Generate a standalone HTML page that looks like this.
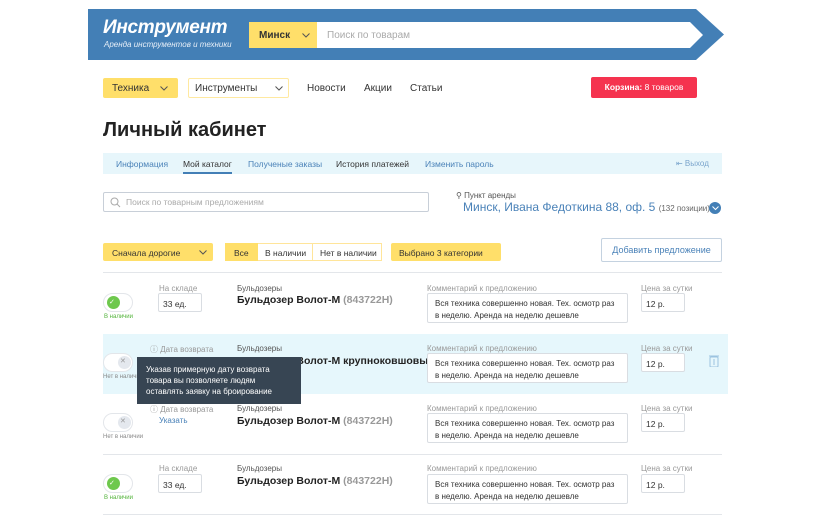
<!DOCTYPE html>
<html><head><meta charset="utf-8"><style>
*{box-sizing:border-box;margin:0;padding:0}
body{width:825px;height:525px;background:#fff;font-family:"Liberation Sans",sans-serif;position:relative;overflow:hidden;color:#222}
.a{position:absolute;white-space:nowrap}
.lbl{font-size:8px;color:#999}
.inp{position:absolute;border:1px solid #d9dde2;border-radius:2px;background:#fff;font-size:8.5px;color:#333}
.cm{font-size:8px;padding:4px 7px;white-space:normal;line-height:12px;width:201px;height:30px}
.tg{position:absolute;width:30px;height:19px;border:1px solid #e3e6ea;border-radius:10px;background:#fff}
.tg i{position:absolute;left:3px;top:2px;width:13px;height:13px;border-radius:50%}
.t{font-size:10.5px;font-weight:bold}
</style></head><body>
<svg class="a" style="left:88px;top:9px" width="640" height="52"><polygon points="0,0 608,0 636,25.5 608,51 0,51" fill="#437fb6"/><polygon points="161,13 602,13 615,26 602,39 161,39" fill="#fff"/><rect x="161" y="13" width="68" height="26" fill="#ffdf6a"/></svg>
<div class="a" style="left:103px;top:17px;color:#fff;font:italic bold 19px 'Liberation Sans',sans-serif;letter-spacing:-0.3px">Инструмент</div>
<div class="a" style="left:104px;top:40px;color:#e6eef7;font:italic 8px 'Liberation Sans',sans-serif">Аренда инструментов и техники</div>
<div class="a" style="left:259px;top:30px;font-size:10px;font-weight:bold;color:#333">Минск</div>
<svg class="a" style="left:302px;top:33px" width="8" height="5"><polyline points="0.5,0.5 4,4 7.5,0.5" fill="none" stroke="#555"/></svg>
<div class="a" style="left:327px;top:30px;font-size:10px;color:#aaa">Поиск по товарам</div>

<div class="a" style="left:103px;top:78px;width:75px;height:20px;background:#ffdf6a;border-radius:2px"></div>
<div class="a" style="left:112px;top:83px;font-size:10px;color:#333">Техника</div>
<svg class="a" style="left:160px;top:86px" width="8" height="5"><polyline points="0.5,0.5 4,4 7.5,0.5" fill="none" stroke="#555"/></svg>
<div class="a" style="left:188px;top:78px;width:101px;height:20px;border:1px solid #ffe9a0;border-radius:2px"></div>
<div class="a" style="left:195px;top:83px;font-size:10px;color:#333">Инструменты</div>
<svg class="a" style="left:275px;top:86px" width="8" height="5"><polyline points="0.5,0.5 4,4 7.5,0.5" fill="none" stroke="#555"/></svg>
<div class="a" style="left:307px;top:83px;font-size:10px;color:#333">Новости</div>
<div class="a" style="left:364px;top:83px;font-size:10px;color:#333">Акции</div>
<div class="a" style="left:410px;top:83px;font-size:10px;color:#333">Статьи</div>
<div class="a" style="left:591px;top:77px;width:106px;height:21px;background:#f5334f;border-radius:2px;color:#fff;font-size:8.5px;line-height:21px;text-align:center"><b>Корзина:</b> 8 товаров</div>

<div class="a" style="left:103px;top:119px;font-size:20px;font-weight:bold;color:#222">Личный кабинет</div>

<div class="a" style="left:103px;top:153px;width:619px;height:21px;background:#e7f6fb"></div>
<div class="a" style="left:116px;top:159px;font-size:8.5px;color:#4a82b8">Информация</div>
<div class="a" style="left:183px;top:159px;font-size:8.5px;color:#333">Мой каталог</div>
<div class="a" style="left:183px;top:172px;width:49px;height:2px;background:#437fb6"></div>
<div class="a" style="left:248px;top:159px;font-size:8.5px;color:#4a82b8">Полученые заказы</div>
<div class="a" style="left:336px;top:159px;font-size:8.5px;color:#333">История платежей</div>
<div class="a" style="left:425px;top:159px;font-size:8.5px;color:#4a82b8">Изменить пароль</div>
<div class="a" style="left:676px;top:159px;font-size:8px;color:#7aa4cc">⇤ Выход</div>

<div class="inp" style="left:103px;top:192px;width:326px;height:20px;border-color:#c8cfd8"></div>
<svg class="a" style="left:110px;top:197px" width="11" height="11"><circle cx="4.5" cy="4.5" r="3.5" fill="none" stroke="#aaa"/><line x1="7" y1="7" x2="10" y2="10" stroke="#aaa"/></svg>
<div class="a" style="left:126px;top:197px;font-size:8.5px;color:#aaa">Поиск по товарным предложениям</div>
<div class="a" style="left:456px;top:191px;font-size:8px;color:#555">⚲ Пункт аренды</div>
<div class="a" style="left:463px;top:200px;font-size:12px;color:#4a82b8">Минск, Ивана Федоткина 88, оф. 5 <span style="font-size:8px;color:#666">(132 позиции)</span></div>
<div class="a" style="left:709px;top:202px;width:12px;height:12px;border-radius:50%;background:#437fb6"></div>
<svg class="a" style="left:712px;top:206px" width="7" height="5"><polyline points="0.5,0.5 3.5,3.5 6.5,0.5" fill="none" stroke="#fff"/></svg>

<div class="a" style="left:103px;top:243px;width:110px;height:18px;background:#ffdf6a;border-radius:2px"></div>
<div class="a" style="left:112px;top:248px;font-size:8.5px;color:#333">Сначала дорогие</div>
<svg class="a" style="left:199px;top:250px" width="8" height="5"><polyline points="0.5,0.5 4,4 7.5,0.5" fill="none" stroke="#555"/></svg>
<div class="a" style="left:225px;top:243px;width:157px;height:18px;border:1px solid #ffe59a"></div>
<div class="a" style="left:225px;top:243px;width:33px;height:18px;background:#ffdf6a"></div>
<div class="a" style="left:234px;top:248px;font-size:8.5px;color:#333">Все</div>
<div class="a" style="left:265px;top:248px;font-size:8.5px;color:#333">В наличии</div>
<div class="a" style="left:312px;top:243px;width:1px;height:18px;background:#ffe59a"></div>
<div class="a" style="left:320px;top:248px;font-size:8.5px;color:#333">Нет в наличии</div>
<div class="a" style="left:391px;top:243px;width:110px;height:18px;background:#ffdf6a;border-radius:2px"></div>
<div class="a" style="left:399px;top:248px;font-size:8.5px;color:#333">Выбрано 3 категории</div>
<div class="a" style="left:601px;top:238px;width:121px;height:24px;border:1px solid #c4d2e0;border-radius:2px;font-size:9px;color:#4a82b8;text-align:center;line-height:22px">Добавить предложение</div>

<div class="a" style="left:103px;top:272px;width:619px;height:1px;background:#e3e6ea"></div>
<div class="a" style="left:103px;top:334px;width:625px;height:60px;background:#e6f7fc"></div>
<div class="a" style="left:103px;top:454px;width:619px;height:1px;background:#e3e6ea"></div>
<div class="a" style="left:103px;top:514px;width:619px;height:1px;background:#e3e6ea"></div>

<!-- row1 -->
<div class="tg" style="left:103px;top:293px"><i style="background:#6ec84d"></i></div>
<div class="a" style="left:109px;top:298px;font-size:7px;color:#fff">✓</div>
<div class="a" style="left:104px;top:314px;font-size:6px;color:#52b33a">В наличии</div>
<div class="a lbl" style="left:159px;top:284px">На складе</div>
<div class="inp" style="left:158px;top:293px;width:44px;height:19px;padding:5px 4px">33 ед.</div>
<div class="a" style="left:237px;top:284px;font-size:8px;color:#555">Бульдозеры</div>
<div class="a t" style="left:237px;top:294px">Бульдозер Волот-М <span style="color:#999">(843722H)</span></div>
<div class="a lbl" style="left:427px;top:284px">Комментарий к предложению</div>
<div class="inp cm" style="left:427px;top:293px">Вся техника совершенно новая. Тех. осмотр раз в неделю. Аренда на неделю дешевле</div>
<div class="a lbl" style="left:641px;top:284px">Цена за сутки</div>
<div class="inp" style="left:641px;top:293px;width:44px;height:19px;padding:5px 4px">12 р.</div>

<!-- row2 -->
<div class="tg" style="left:103px;top:353px"><i style="left:14px;background:#e4e8ee"></i></div>
<div class="a" style="left:120px;top:357px;font-size:7px;color:#999">✕</div>
<div class="a" style="left:103px;top:374px;font-size:6px;color:#888">Нет в наличии</div>
<div class="a lbl" style="left:150px;top:344px">ⓘ Дата возврата</div>
<div class="a" style="left:237px;top:344px;font-size:8px;color:#555">Бульдозеры</div>
<div class="a t" style="left:237px;top:355px">Бульдозер Волот-М крупноковшовый</div>
<div class="a t" style="left:237px;top:367px;color:#999">(843722H)</div>
<div class="a lbl" style="left:427px;top:344px">Комментарий к предложению</div>
<div class="inp cm" style="left:427px;top:353px">Вся техника совершенно новая. Тех. осмотр раз в неделю. Аренда на неделю дешевле</div>
<div class="a lbl" style="left:641px;top:344px">Цена за сутки</div>
<div class="inp" style="left:641px;top:353px;width:44px;height:19px;padding:5px 4px">12 р.</div>
<svg class="a" style="left:709px;top:354px" width="10" height="13"><rect x="1" y="3" width="8" height="10" rx="1" fill="none" stroke="#9cc3e0"/><line x1="0" y1="2" x2="10" y2="2" stroke="#9cc3e0"/><line x1="5" y1="5" x2="5" y2="11" stroke="#9cc3e0"/></svg>
<div class="a" style="left:137px;top:357px;width:164px;height:47px;background:#374553;color:#fff;font-size:8px;line-height:11px;padding:7px 9px;white-space:normal">Указав примерную дату возврата товара вы позволяете людям оставлять заявку на броирование</div>

<!-- row3 -->
<div class="tg" style="left:103px;top:413px"><i style="left:14px;background:#e4e8ee"></i></div>
<div class="a" style="left:120px;top:417px;font-size:7px;color:#999">✕</div>
<div class="a" style="left:103px;top:434px;font-size:6px;color:#888">Нет в наличии</div>
<div class="a lbl" style="left:150px;top:404px">ⓘ Дата возврата</div>
<div class="a" style="left:159px;top:416px;font-size:8px;color:#4a82b8">Указать</div>
<div class="a" style="left:237px;top:404px;font-size:8px;color:#555">Бульдозеры</div>
<div class="a t" style="left:237px;top:415px">Бульдозер Волот-М <span style="color:#999">(843722H)</span></div>
<div class="a lbl" style="left:427px;top:404px">Комментарий к предложению</div>
<div class="inp cm" style="left:427px;top:413px">Вся техника совершенно новая. Тех. осмотр раз в неделю. Аренда на неделю дешевле</div>
<div class="a lbl" style="left:641px;top:404px">Цена за сутки</div>
<div class="inp" style="left:641px;top:413px;width:44px;height:19px;padding:5px 4px">12 р.</div>

<!-- row4 -->
<div class="tg" style="left:103px;top:474px"><i style="background:#6ec84d"></i></div>
<div class="a" style="left:109px;top:479px;font-size:7px;color:#fff">✓</div>
<div class="a" style="left:104px;top:495px;font-size:6px;color:#52b33a">В наличии</div>
<div class="a lbl" style="left:159px;top:464px">На складе</div>
<div class="inp" style="left:158px;top:474px;width:44px;height:19px;padding:5px 4px">33 ед.</div>
<div class="a" style="left:237px;top:464px;font-size:8px;color:#555">Бульдозеры</div>
<div class="a t" style="left:237px;top:475px">Бульдозер Волот-М <span style="color:#999">(843722H)</span></div>
<div class="a lbl" style="left:427px;top:464px">Комментарий к предложению</div>
<div class="inp cm" style="left:427px;top:474px">Вся техника совершенно новая. Тех. осмотр раз в неделю. Аренда на неделю дешевле</div>
<div class="a lbl" style="left:641px;top:464px">Цена за сутки</div>
<div class="inp" style="left:641px;top:474px;width:44px;height:19px;padding:5px 4px">12 р.</div>
</body></html>
